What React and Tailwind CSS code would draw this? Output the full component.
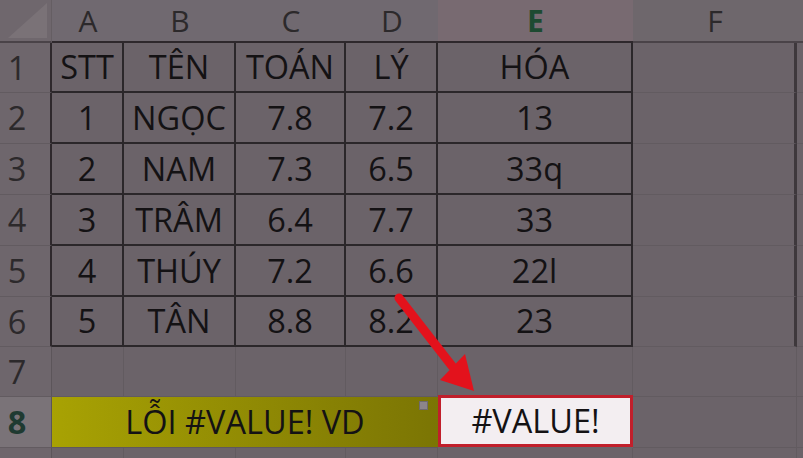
import React from "react";

const data = [
  ["STT", "TÊN", "TOÁN", "LÝ", "HÓA"],
  ["1", "NGỌC", "7.8", "7.2", "13"],
  ["2", "NAM", "7.3", "6.5", "33q"],
  ["3", "TRÂM", "6.4", "7.7", "33"],
  ["4", "THÚY", "7.2", "6.6", "22l"],
  ["5", "TÂN", "8.8", "8.2", "23"],
];

const letters = ["A", "B", "C", "D", "E", "F"];

export default function App() {
  const font = { fontFamily: '"Open Sans", "Noto Sans", sans-serif' };
  return (
    <div
      className="relative w-[803px] h-[458px] overflow-hidden bg-[#6b6369] text-[32.5px] leading-[36px] text-[#141214]"
      style={font}
    >
      <div className="grid grid-cols-[52px_72px_112px_110px_92px_195px_164px_6px] grid-rows-[43px_50px_51px_51px_51px_51px_50px_50px_51px_10px]">
        {/* corner */}
        <div className="relative bg-[#6f676d] border-b-2 border-r border-b-[#4a4348] border-r-[#655e63]">
          <svg className="absolute left-0 top-0" width="52" height="43" viewBox="0 0 52 43">
            <polygon points="8,38 47,38 47,3" fill="#7a7277" />
          </svg>
        </div>
        {/* column headers */}
        {letters.map((l, i) => (
          <div
            key={l}
            className={
              "flex items-start justify-center text-[30px] leading-[41px] border-b-2 " +
              (i === 4
                ? "bg-[#786a71] border-b-[#2e282c] font-bold text-[#1d4a31]"
                : i < 4
                ? "bg-[#706970] border-b-[#2e282c] text-[#2c292b]"
                : "bg-[#6e676c] border-b-[#4a4348] text-[#2c292b]")
            }
          >
            {l}
          </div>
        ))}
        <div className="bg-[#6e676c] border-b-2 border-b-[#4a4348]" />

        {/* rows 1-6 */}
        {data.map((row, r) => (
          <React.Fragment key={r}>
            <div className="flex items-center border-b border-b-[#625b60] border-r-2 border-r-[#2e282c] bg-[#6e666c] text-[#2c292b]">
              <span className="w-[34px] text-center">{r + 1}</span>
            </div>
            {row.map((v, c) => (
              <div
                key={c}
                className="flex items-center justify-center border-r-2 border-b-2 border-[#2b272a]"
              >
                {v}
              </div>
            ))}
            <div className="border-b border-b-[#625b60] border-r-3 border-r-[#3e383c]" />
            <div className="border-b border-b-[#625b60]" />
          </React.Fragment>
        ))}

        {/* row 7 */}
        <div className="flex items-center border-b border-b-[#625b60] border-r border-r-[#5c555a] bg-[#6e666c] text-[#2c292b]">
          <span className="w-[34px] text-center">7</span>
        </div>
        {[0, 1, 2, 3, 4, 5].map((c) => (
          <div key={c} className="border-r border-b border-[#625b60]" />
        ))}
        <div className="border-b border-b-[#625b60]" />

        {/* row 8 */}
        <div className="flex items-center border-b border-b-[#625b60] border-r border-r-[#5c555a] bg-[#7a7378] text-[#1f3a31] font-bold">
          <span className="w-[34px] text-center">8</span>
        </div>
        <div className="relative col-span-4 flex items-center justify-center bg-linear-to-r from-[#a8a203] to-[#7b7504] border-b border-b-[#5f585d]">
          LỖI #VALUE! VD
          <div className="absolute right-[10px] top-[4px] w-[9px] h-[9px] bg-[#8c858a] border border-[#6f6a6d]" />
        </div>
        <div className="flex items-center justify-center bg-[#f3eef1] border-[3px] border-[#c11f2b] -mt-[2px] mb-[1px]">
          #VALUE!
        </div>
        <div className="border-r border-b border-[#625b60]" />
        <div className="border-b border-b-[#625b60]" />

        {/* row 9 partial */}
        <div className="bg-[#6e666c] border-r border-r-[#5c555a]" />
        {[0, 1, 2, 3, 4, 5].map((c) => (
          <div key={c} className="border-r border-[#625b60]" />
        ))}
        <div />
      </div>

      {/* red arrow */}
      <svg className="absolute left-0 top-0 pointer-events-none" width="803" height="458" viewBox="0 0 803 458">
        <line x1="399" y1="298" x2="452" y2="366" stroke="#e3121c" strokeWidth="9" strokeLinecap="round" />
        <polygon points="474,391 440,380 465,354" fill="#e3121c" />
      </svg>
    </div>
  );
}
